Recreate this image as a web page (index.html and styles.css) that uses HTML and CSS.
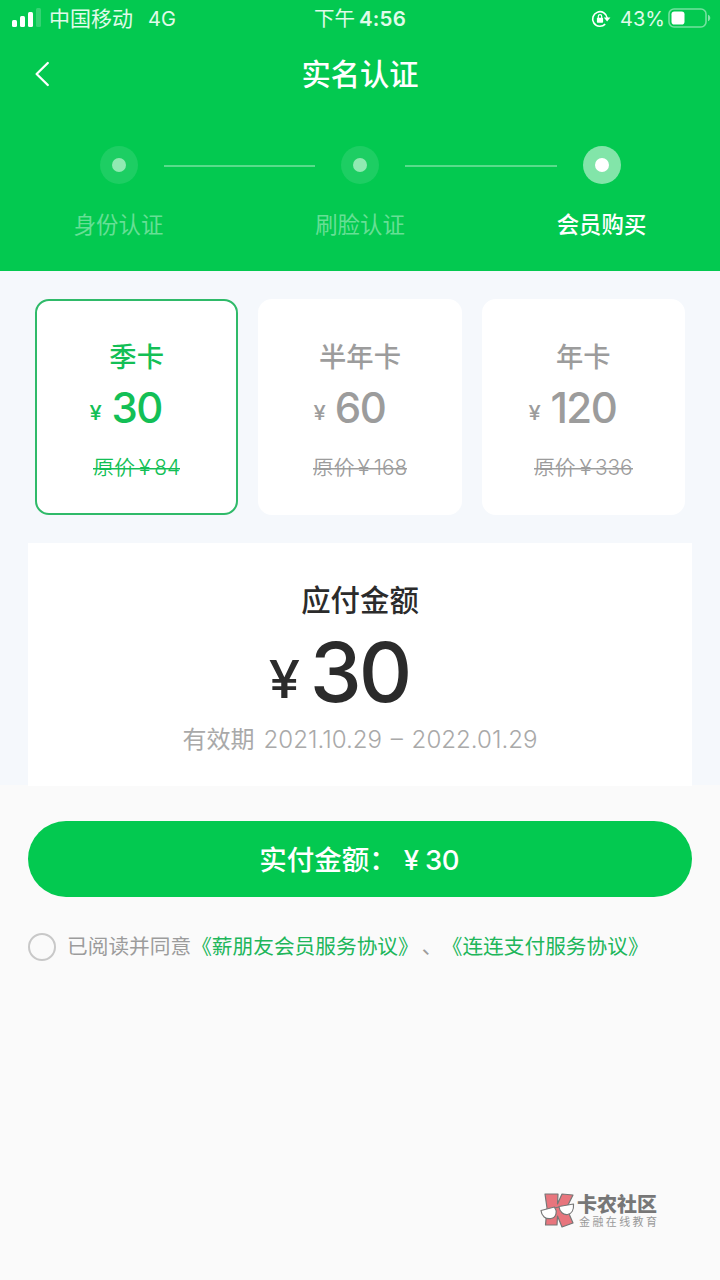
FILE: index.html
```html
<!DOCTYPE html>
<html lang="zh-CN">
<head>
<meta charset="utf-8">
<title>实名认证</title>
<link rel="stylesheet" href="styles.css">
</head>
<body>
<header class="header">
  <div class="status">
    <div class="status-left">
      <svg class="signal" width="30" height="20" viewBox="0 0 30 20" fill="#fff">
        <rect x="0" y="12" width="5" height="7" rx="1.5"/>
        <rect x="8" y="8" width="5" height="11" rx="1.5"/>
        <rect x="16" y="4" width="5" height="15" rx="1.5"/>
        <rect x="24" y="0" width="5" height="19" rx="1.5" opacity=".2"/>
      </svg>
      <span class="carrier">中国移动</span>
      <span class="network">4G</span>
    </div>
    <div class="clock"><span>下午</span><b>4:56</b></div>
    <div class="status-right">
      <svg class="lock" width="20" height="18" viewBox="0 0 20 18" fill="none" stroke="#fff" stroke-width="1.6">
        <path d="M14.2 14.1A7.3 7.3 0 1 1 16.2 8"/>
        <path d="M12.8 7.6h6.6l-3.3 3.9z" fill="#fff" stroke="none"/>
        <rect x="5.9" y="7.7" width="6.2" height="5" rx=".8" fill="#fff" stroke="none"/>
        <path d="M7.3 8V6.3a1.7 1.7 0 0 1 3.4 0V8" stroke-width="1.2"/>
      </svg>
      <span class="percent">43%</span>
      <svg class="battery" width="43" height="20" viewBox="0 0 43 20">
        <rect x="1" y="1" width="37" height="18" rx="5" fill="none" stroke="#fff" stroke-width="1.6" opacity=".45"/>
        <rect x="3.5" y="3.5" width="13" height="13" rx="2.8" fill="#fff"/>
        <path d="M40 6.8c3 1 3 5.400 0 6.400z" fill="#fff" opacity=".5"/>
      </svg>
    </div>
  </div>
  <nav class="nav">
    <svg class="back" width="16" height="26" viewBox="0 0 16 26" fill="none" stroke="#fff" stroke-width="2.300" stroke-linecap="round" stroke-linejoin="round"><path d="M13.800 2L2.600 13l11.200 11"/></svg>
    <h1 class="title">实名认证</h1>
  </nav>
  <div class="steps">
    <div class="step"><i class="dot"></i><span>身份认证</span></div>
    <div class="rail"></div>
    <div class="step"><i class="dot"></i><span>刷脸认证</span></div>
    <div class="rail"></div>
    <div class="step current"><i class="dot"></i><span>会员购买</span></div>
  </div>
</header>

<main class="plans">
  <section class="cards">
    <div class="card selected">
      <h2 class="card-name">季卡</h2>
      <div class="price"><small>¥</small><b>30</b></div>
      <div class="was"><span class="was-label">原价</span><span class="yen">¥</span><span>84</span></div>
    </div>
    <div class="card">
      <h2 class="card-name">半年卡</h2>
      <div class="price"><small>¥</small><b>60</b></div>
      <div class="was"><span class="was-label">原价</span><span class="yen">¥</span><span>168</span></div>
    </div>
    <div class="card">
      <h2 class="card-name">年卡</h2>
      <div class="price"><small>¥</small><b>120</b></div>
      <div class="was"><span class="was-label">原价</span><span class="yen">¥</span><span>336</span></div>
    </div>
  </section>
  <section class="payable">
    <h2 class="payable-title">应付金额</h2>
    <div class="total"><small>¥</small><b>30</b></div>
    <div class="validity"><span>有效期</span><span class="dates">2021.10.29 – 2022.01.29</span></div>
  </section>
</main>

<footer class="checkout">
  <button class="pay"><span>实付金额：</span><span class="pay-yen">¥</span><span class="pay-sum">30</span></button>
  <div class="agree">
    <i class="radio"></i>
    <span class="agree-text">已阅读并同意</span>
    <a class="link">《薪朋友会员服务协议》</a>
    <span class="comma">、</span>
    <a class="link">《连连支付服务协议》</a>
  </div>
</footer>

<aside class="brand">
  <svg class="brand-mark" width="36" height="38" viewBox="0 0 36 38" stroke="#777" stroke-width="1.200" stroke-linejoin="round">
    <path d="M5 3h13l-.5 10L22 3l11 1-6.500 13L33 32l-11 4-4.500-11-.5 9H5.500L7 17z" fill="#e8757d"/>
    <path d="M1 19.500l13.500-3.500c3 4.500 2 10.500-3.500 11.500S1.500 25 1 19.500z" fill="#fff"/>
    <path d="M19 15.500l14.500-2.500c.5 6-2 10-6 10.500s-8-2.500-8.500-8z" fill="#fff"/>
    <path d="M14.500 17l4.500-1" fill="none"/>
  </svg>
  <div class="brand-words"><b>卡农社区</b><span>金融在线教育</span></div>
</aside>
</body>
</html>
```

FILE: styles.css
```css
* { box-sizing: border-box; }
body {
  margin: 0;
  width: 720px;
  height: 1280px;
  overflow: hidden;
  position: relative;
  background: #fafafa;
  font-family: Inter, "Noto Sans CJK SC", sans-serif;
  color: #2b2b2b;
}
h1, h2 { margin: 0; }
svg { display: block; flex: none; }
span, b, a, small { white-space: nowrap; }

.header { height: 271px; background: #03c950; color: #fff; }
.status {
  height: 37px;
  display: grid;
  grid-template-columns: 1fr auto 1fr;
  align-items: center;
  padding: 0 9px 0 12px;
  font-size: 20.5px;
  line-height: 36px;
}
.status-left, .status-right { display: flex; align-items: center; color: #e0fbea; }
.status-right { justify-content: flex-end; }
.signal { margin-top: -2px; }
.carrier { margin-left: 7px; font-size: 21px; }
.network { margin-left: 15px; font-size: 20px; }
.clock { display: flex; gap: 4px; margin-right: 3px; color: #e0fbea; }
.clock b { font-weight: 600; letter-spacing: .2px; }
.percent { margin: 0 3px 0 9px; font-size: 20px; }
.battery { margin-top: -1px; }

.nav { height: 75px; display: grid; grid-template-columns: 100px 1fr 100px; align-items: center; }
.back { margin: -3px 0 0 34px; }
.title { font-size: 29.300px; font-weight: 500; line-height: 76px; text-align: center; }

.steps { display: flex; padding: 34px 73.500px 0; }
.step {
  width: 90px;
  display: flex;
  flex-direction: column;
  align-items: center;
  gap: 25px;
  font-size: 22.400px;
  line-height: 32px;
  color: #66df95;
}
.dot {
  width: 38px;
  height: 38px;
  border-radius: 50%;
  background: #1dce63;
  display: grid;
  place-items: center;
}
.dot::before { content: ""; width: 14px; height: 14px; border-radius: 50%; background: #90eab2; }
.rail { flex: 1; height: 2px; margin-top: 19px; background: #58dc8b; }
.current { color: #fff; font-weight: 500; }
.current .dot { background: #82e5a9; }
.current .dot::before { background: #fff; }

.plans { height: 514px; padding: 28px 28px 0; background: #f5f8fc; }
.cards { display: grid; grid-template-columns: repeat(3, 1fr); gap: 20px; padding: 0 7px; }
.card {
  height: 216px;
  border: 2px solid #fff;
  border-radius: 14px;
  background: #fff;
  color: #9c9c9c;
  display: flex;
  flex-direction: column;
  align-items: center;
  padding-top: 37px;
}
.selected { border-color: #2fba69; color: #13bf56; }
.card-name { font-size: 27.300px; font-weight: 500; line-height: 40px; }
.price { display: flex; align-items: baseline; gap: 10px; height: 56px; line-height: 56px; margin: 2px 21px 0 0; }
.price small { font-size: 20px; font-weight: 500; transform: translateY(-3px) scaleX(1.100); }
.price b { font-size: 42px; font-weight: 550; letter-spacing: -1.500px; }
.was {
  display: flex;
  gap: 4px;
  margin-top: 17px;
  font-size: 20.800px;
  font-weight: 300;
  line-height: 30px;
  background: linear-gradient(currentColor, currentColor) 0 15px / 100% 1.500px no-repeat;
}
.was-label { font-weight: 350; }
.was .yen { transform: scaleX(1.100); }

.payable {
  height: 243px;
  margin-top: 28px;
  padding-top: 37px;
  background: #fff;
  display: flex;
  flex-direction: column;
  align-items: center;
}
.payable-title { font-size: 29.400px; font-weight: 500; line-height: 42px; }
.total { display: flex; align-items: baseline; gap: 11px; height: 90px; line-height: 90px; margin: 5px 41px 0 0; }
.total small { font-size: 52px; font-weight: 450; transform: translateY(-4px) scaleX(1.080); }
.total b { font-size: 83px; font-weight: 450; letter-spacing: -3px; }
.validity { display: flex; gap: 9px; margin-top: 5px; font-size: 24px; line-height: 36px; color: #a9a9a9; }
.dates { font-weight: 300; word-spacing: 2px; font-size: 24.100px; }

.checkout { padding: 36px 28px 0; }
.pay {
  width: 664px;
  height: 76px;
  border: 0;
  border-radius: 38px;
  padding: 0 2px 0 0;
  background: #03c950;
  color: #fff;
  font: 500 27.500px/78px Inter, "Noto Sans CJK SC", sans-serif;
  display: flex;
  justify-content: center;
}
.pay-yen { margin: 0 6px 0 7px; font-weight: 450; }
.pay-sum { font-weight: 450; letter-spacing: -.7px; }
.agree { display: flex; align-items: center; height: 30px; margin-top: 35px; font-size: 20.700px; line-height: 34px; color: #9c9c9c; }
.radio { width: 28px; height: 28px; border: 2.500px solid #c8c8c8; border-radius: 50%; margin-right: 11px; flex: none; }
.link { color: #20b65a; }
.comma { width: 20px; margin-left: 3px; }

.brand { position: absolute; left: 540px; top: 1191px; display: flex; gap: 1px; color: #777; }
.brand-words { display: flex; flex-direction: column; }
.brand-words b { font-size: 20px; font-weight: 900; line-height: 28px; }
.brand-words span { font-size: 11px; letter-spacing: 2.400px; line-height: 6px; padding-left: 2px; color: #999; }
```
